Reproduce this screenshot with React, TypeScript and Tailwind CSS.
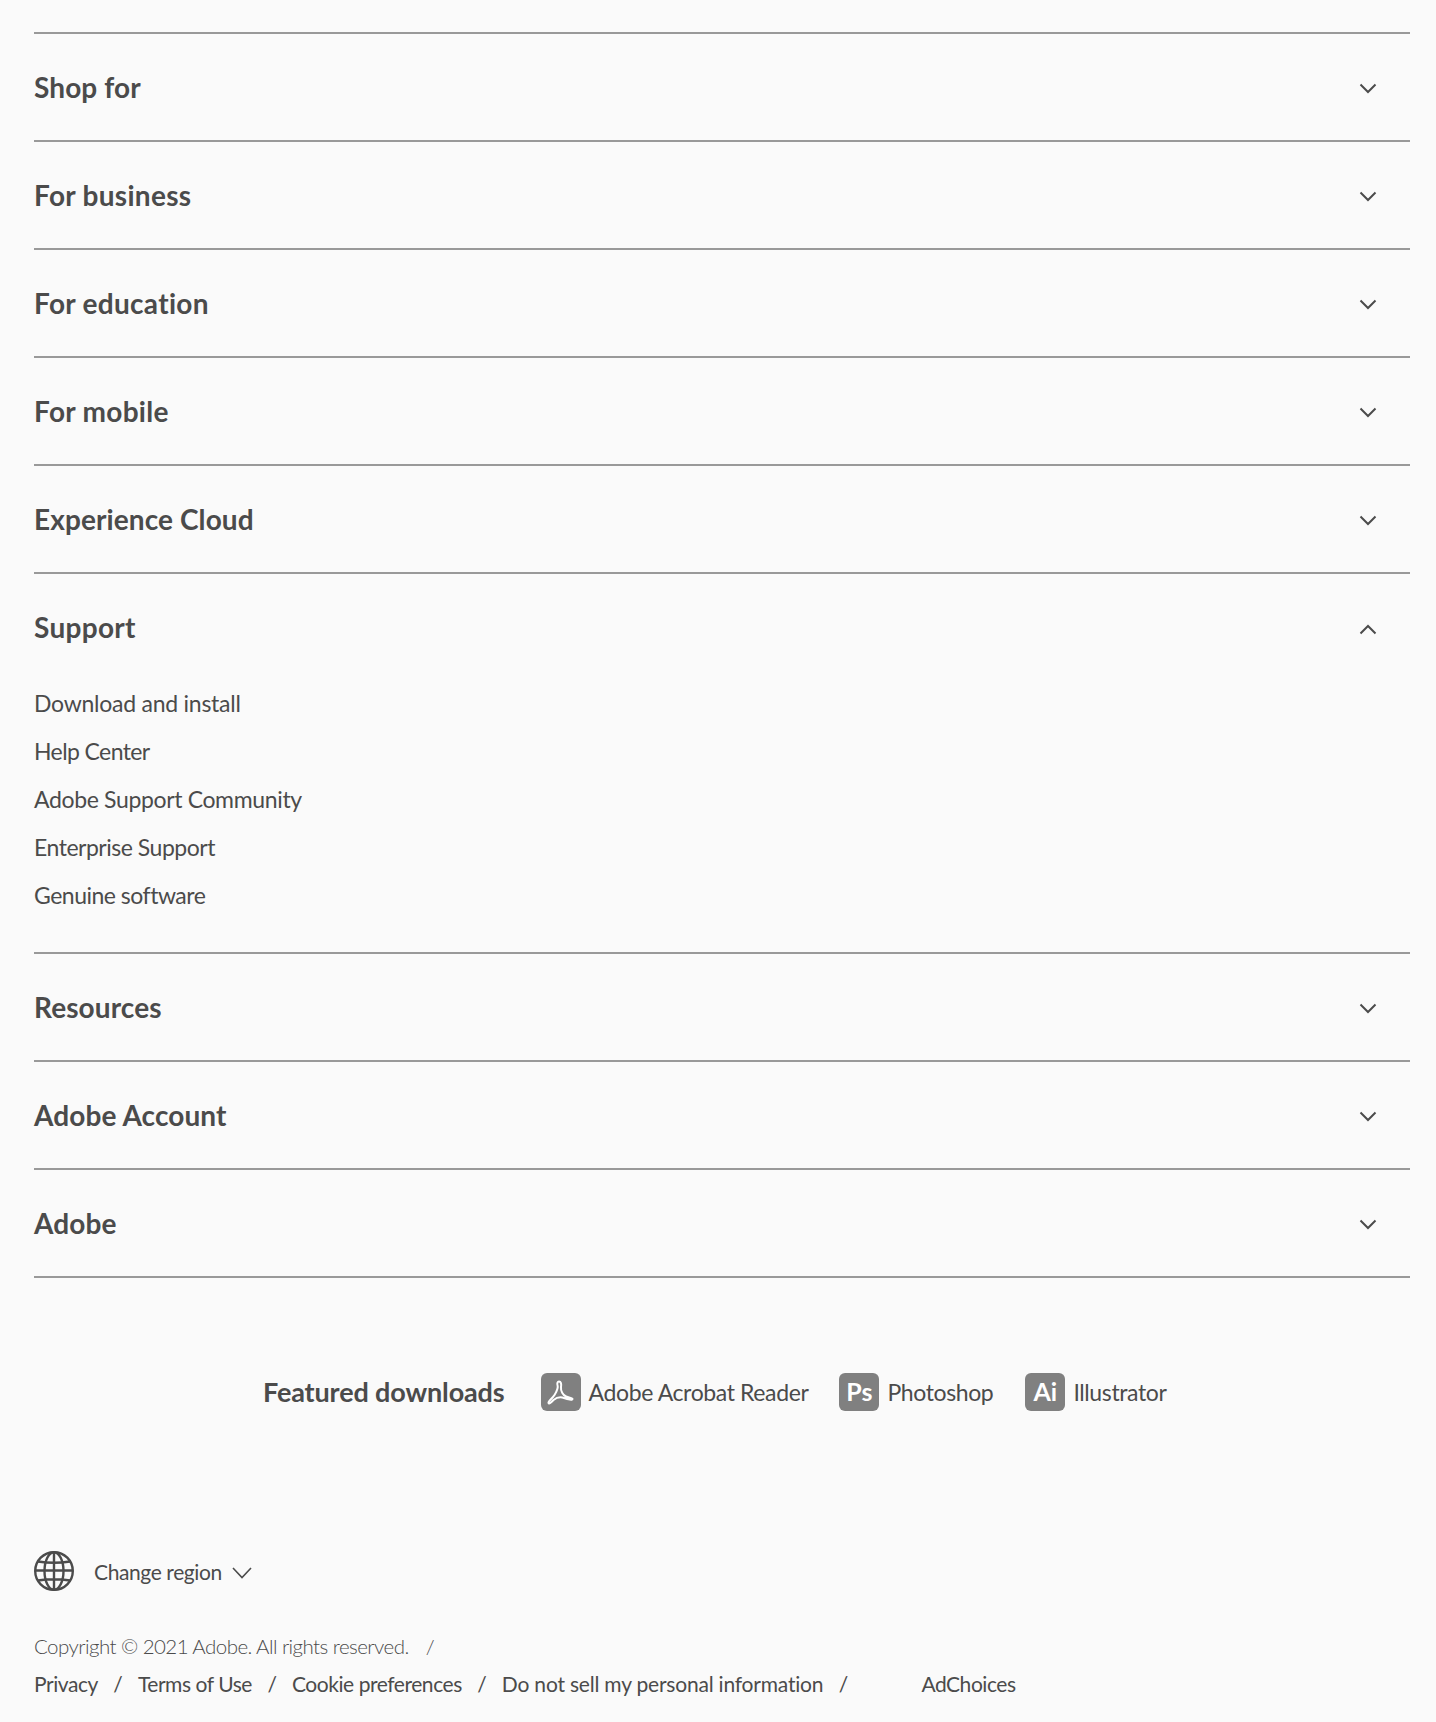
const Chevron = ({ up = false }: { up?: boolean }) => (
  <svg width="18" height="11" viewBox="0 0 18 11" fill="none" className={up ? "mt-[4px] block" : "mt-[2px] block"}>
    <path d={up ? "M1.5 9.5 9 2l7.5 7.5" : "M1.5 1.5 9 9l7.5-7.5"} stroke="#4b4b4b" strokeWidth="2" />
  </svg>
);

const Row = ({ title, tight = false, up = false }: { title: string; tight?: boolean; up?: boolean }) => (
  <div className="flex h-[106px] items-center justify-between pr-[33px]">
    <h3 className={tight ? "text-[28px] leading-[36px] font-bold tracking-[0.1px]" : "text-[28px] leading-[36px] font-bold tracking-[0.3px]"}>{title}</h3>
    <Chevron up={up} />
  </div>
);

const Section = ({ title, tight = false }: { title: string; tight?: boolean }) => (
  <section className="border-t-2 border-[#999999]">
    <Row title={title} tight={tight} />
  </section>
);

const Tile = ({ children }: { children: React.ReactNode }) => (
  <span className="flex h-[38px] w-[40px] items-center justify-center rounded-[6px] bg-[#808080] text-[25px] font-bold tracking-normal text-white">
    {children}
  </span>
);

const Slash = () => <span className="mx-[15.5px]">/</span>;

export default function App() {
  return (
    <div className="min-h-[1722px] bg-[#fafafa] pt-[32px] pr-[26px] pb-[18px] pl-[34px] text-[#4b4b4b] [font-family:Lato,'Liberation_Sans',sans-serif]">
      <Section title="Shop for" tight />
      <Section title="For business" />
      <Section title="For education" />
      <Section title="For mobile" />
      <Section title="Experience Cloud" tight />
      <section className="border-t-2 border-[#999999]">
        <Row title="Support" up />
        <ul className="-mt-px flex h-[273px] flex-col text-[23px] leading-[48px]">
          <li className="tracking-[-0.25px]">Download and install</li>
          <li className="tracking-[-0.6px]">Help Center</li>
          <li className="tracking-[-0.35px]">Adobe Support Community</li>
          <li className="tracking-[-0.48px]">Enterprise Support</li>
          <li className="tracking-[-0.5px]">Genuine software</li>
        </ul>
      </section>
      <Section title="Resources" tight />
      <Section title="Adobe Account" tight />
      <Section title="Adobe" tight />
      <div className="border-t-2 border-[#999999]" />

      <div className="mt-[95px] flex h-[38px] items-center pl-[229px] text-[23px] tracking-[-0.38px]">
        <h4 className="mr-[36px] text-[27px] font-bold tracking-[-0.13px]">Featured downloads</h4>
        <div className="flex items-center gap-[8px]">
          <Tile>
            <svg width="40" height="38" viewBox="0 0 40 38" fill="none">
              <path
                d="M18 8.500C20 8.500 20.500 11 20 14C19.500 18 22 22 25 23.500C28 25 31.500 24.500 31.500 26C31.500 27.500 27 26.500 23 25C19 23.500 15 25 12.500 27C10 29.500 8 31.500 7.500 30C7 28 11 26 13.500 22C16 18 17.500 15 16.500 12C16 10 16.500 8.500 18 8.500Z"
                stroke="white"
                strokeWidth="2"
              />
            </svg>
          </Tile>
          <span>Adobe Acrobat Reader</span>
        </div>
        <div className="ml-[31px] flex items-center gap-[8px]">
          <Tile>Ps</Tile>
          <span>Photoshop</span>
        </div>
        <div className="ml-[32px] flex items-center gap-[8px]">
          <Tile>Ai</Tile>
          <span>Illustrator</span>
        </div>
      </div>

      <div className="mt-[140px] flex h-[40px] items-center text-[21px] tracking-[-0.4px]">
        <svg width="40" height="40" viewBox="0 0 40 40" fill="none" stroke="#4b4b4b" strokeWidth="2.400">
          <circle cx="20" cy="20" r="18.800" />
          <ellipse cx="20" cy="20" rx="9.500" ry="18.800" />
          <path d="M20 1v38M4 10.500Q20 13 36 10.500M1 19.500h38M4 29.500Q20 27 36 29.500" />
        </svg>
        <span className="mt-[2px] ml-[20px]">Change region</span>
        <svg width="20" height="12" viewBox="0 0 20 12" fill="none" className="mt-[4px] ml-[10px]">
          <path d="M1 1l9 9.500L19 1" stroke="#4b4b4b" strokeWidth="1.600" />
        </svg>
      </div>

      <div className="mt-[36px] text-[21px] leading-[38px] tracking-[-0.45px]">
        <div className="text-[20.5px] font-light tracking-[-0.55px]">
          Copyright © 2021 Adobe. All rights reserved.
          <span className="mx-[17px]">/</span>
        </div>
        <div className="flex">
          <span>Privacy</span>
          <Slash />
          <span>Terms of Use</span>
          <Slash />
          <span>Cookie preferences</span>
          <Slash />
          <span className="tracking-[-0.2px]">Do not sell my personal information</span>
          <Slash />
          <span className="ml-[58px]">AdChoices</span>
        </div>
      </div>
    </div>
  );
}
